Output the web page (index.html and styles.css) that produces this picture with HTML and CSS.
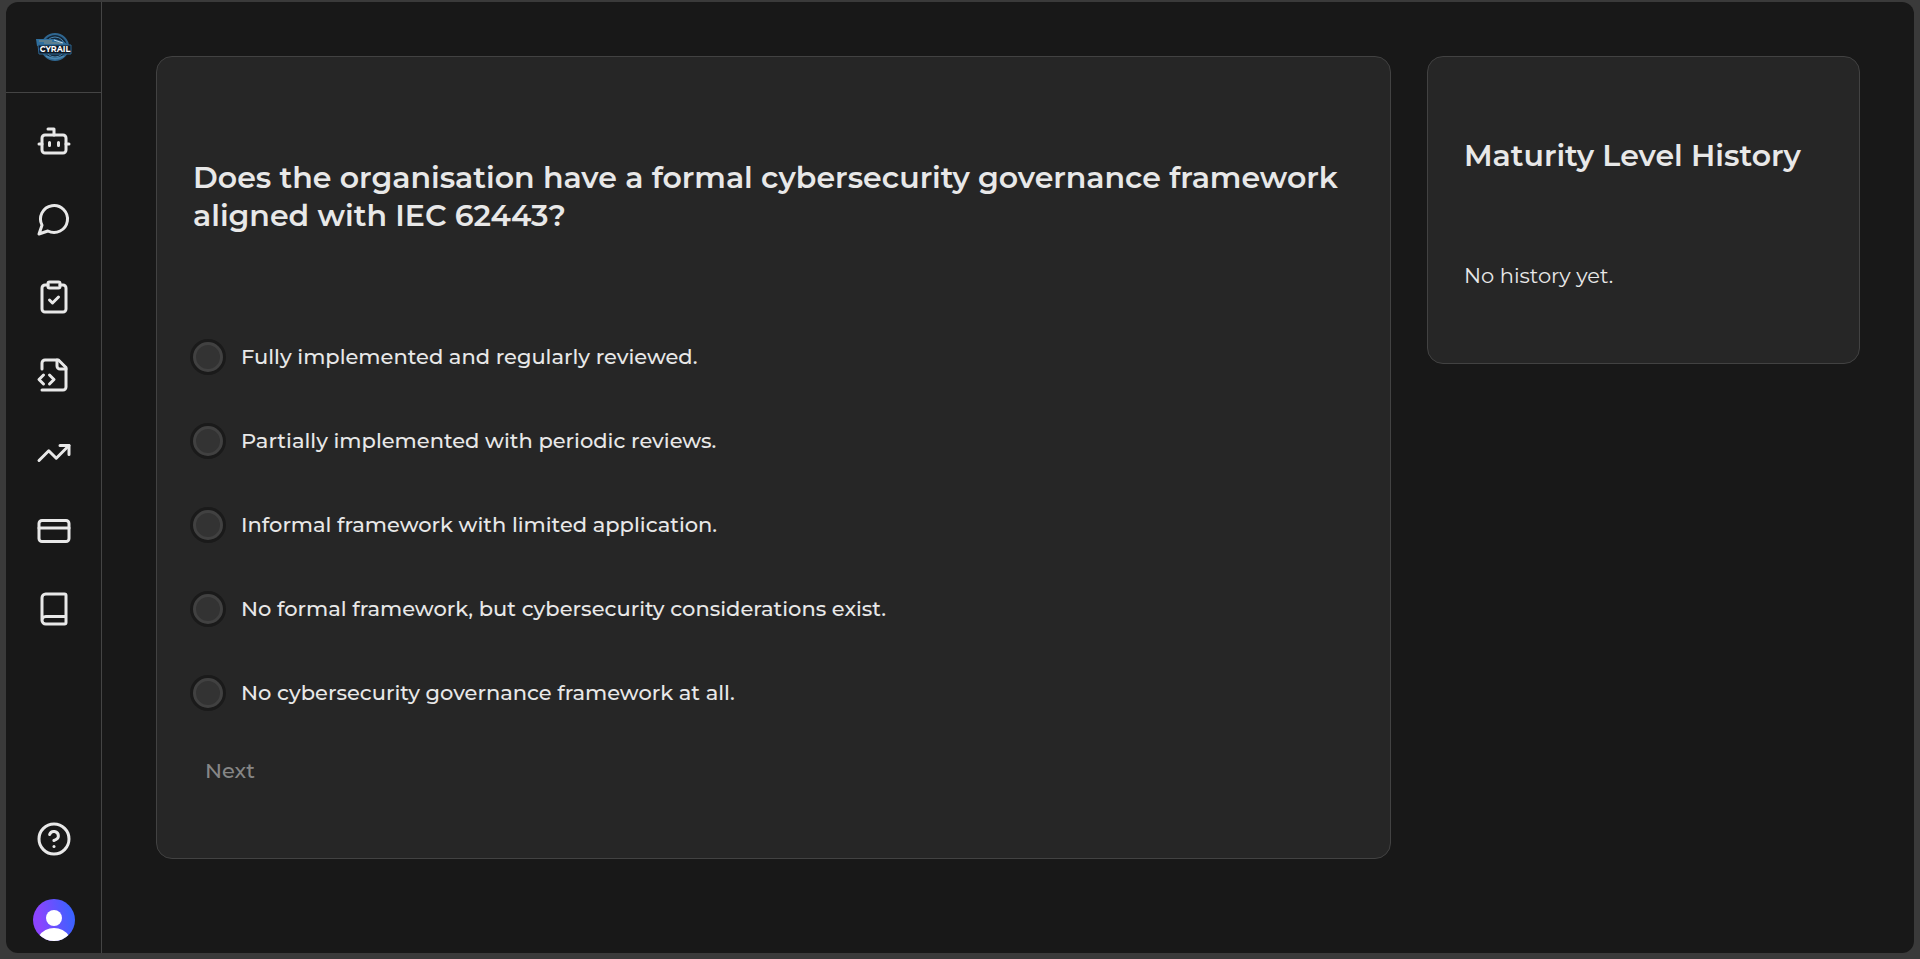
FILE: index.html
```html
<!DOCTYPE html>
<html lang="en">
<head>
  <meta charset="UTF-8">
  <title>Cyrail - Maturity Assessment</title>
  <meta name="viewport" content="width=device-width, initial-scale=1.0">
  <link rel="stylesheet" href="styles.css">
</head>
<body>
  <div class="app">
    <aside class="sidebar">
      <a class="logo" href="#" aria-label="Cyrail home">
        <svg width="36" height="30" viewBox="0 0 36 30">
          <circle cx="19" cy="15" r="13" fill="#14283a" stroke="#2f6690" stroke-width="2"/>
          <circle cx="19" cy="15" r="10" fill="none" stroke="#4a86b0" stroke-width="1"/>
          <path d="M0 7h19l9 3 6 4H1z" fill="#2f6f9e"/>
          <path d="M3 9h13M8 11h18" stroke="#8d9080" stroke-width="1"/>
          <path d="M18 8l9 3" stroke="#b5d0e2" stroke-width="1"/>
          <path d="M2 13h33v9H3z" fill="#0d1826" stroke="#2f6690" stroke-width="1"/>
          <path d="M10 24q9 5 18 0" fill="none" stroke="#4a86b0" stroke-width="2"/>
          <text class="logo-text" x="19" y="20" text-anchor="middle">CYRAIL</text>
        </svg>
      </a>
      <nav class="nav">
        <a href="#" aria-label="Assistant">
          <svg class="icon" viewBox="0 0 24 24"><path d="M12 8V4H8"/><rect width="16" height="12" x="4" y="8" rx="2"/><path d="M2 14h2M20 14h2M15 13v2M9 13v2"/></svg>
        </a>
        <a href="#" aria-label="Chat">
          <svg class="icon" viewBox="0 0 24 24"><path d="M7.9 20A9 9 0 1 0 4 16.1L2 22Z"/></svg>
        </a>
        <a href="#" aria-label="Assessment">
          <svg class="icon" viewBox="0 0 24 24"><rect width="8" height="4" x="8" y="2" rx="1"/><path d="M16 4h2a2 2 0 0 1 2 2v14a2 2 0 0 1-2 2H6a2 2 0 0 1-2-2V6a2 2 0 0 1 2-2h2"/><path d="m9 14 2 2 4-4"/></svg>
        </a>
        <a href="#" aria-label="Code review">
          <svg class="icon" viewBox="0 0 24 24"><path d="M4 22h14a2 2 0 0 0 2-2V7l-5-5H6a2 2 0 0 0-2 2v4"/><path d="M14 2v4a2 2 0 0 0 2 2h4"/><path d="m5 12-3 3 3 3"/><path d="m9 18 3-3-3-3"/></svg>
        </a>
        <a href="#" aria-label="Trends">
          <svg class="icon" viewBox="0 0 24 24"><path d="M22 7 13.5 15.5 8.5 10.5 2 17"/><path d="M16 7h6v6"/></svg>
        </a>
        <a href="#" aria-label="Billing">
          <svg class="icon" viewBox="0 0 24 24"><rect width="20" height="14" x="2" y="5" rx="2"/><path d="M2 10h20"/></svg>
        </a>
        <a href="#" aria-label="Docs">
          <svg class="icon" viewBox="0 0 24 24"><path d="M4 19.5v-15A2.5 2.5 0 0 1 6.5 2H19a1 1 0 0 1 1 1v18a1 1 0 0 1-1 1H6.5a1 1 0 0 1 0-5H20"/></svg>
        </a>
      </nav>
      <div class="sidebar-bottom">
        <a href="#" aria-label="Help">
          <svg class="icon" viewBox="0 0 24 24"><circle cx="12" cy="12" r="10"/><path d="M9.09 9a3 3 0 0 1 5.83 1c0 2-3 3-3 3"/><path d="M12 17h.01"/></svg>
        </a>
        <button class="avatar" type="button" aria-label="Account">
          <svg width="42" height="42" viewBox="0 0 42 42">
            <circle cx="21" cy="19" r="8" fill="#fff"/>
            <path d="M6 37a18 18 0 0 1 30 0v6H6z" fill="#fff"/>
          </svg>
        </button>
      </div>
    </aside>

    <main class="content">
      <form class="card question">
        <h2 id="question">Does the organisation have a formal cybersecurity governance framework aligned with IEC 62443?</h2>
        <div class="options" role="radiogroup" aria-labelledby="question">
          <label><input type="radio" name="answer" value="5">Fully implemented and regularly reviewed.</label>
          <label><input type="radio" name="answer" value="4">Partially implemented with periodic reviews.</label>
          <label><input type="radio" name="answer" value="3">Informal framework with limited application.</label>
          <label><input type="radio" name="answer" value="2">No formal framework, but cybersecurity considerations exist.</label>
          <label><input type="radio" name="answer" value="1">No cybersecurity governance framework at all.</label>
        </div>
        <button class="next" type="button" disabled>Next</button>
      </form>

      <section class="card history">
        <h2>Maturity Level History</h2>
        <p>No history yet.</p>
      </section>
    </main>
  </div>
</body>
</html>
```
FILE: styles.css
```css
* {
  box-sizing: border-box;
}
body {
  margin: 0;
  min-height: 100vh;
  padding: 2px 6px 6px;
  display: flex;
  background: #3a3a3a;
  color: #e8e8e8;
  font-family: Montserrat, Inter, sans-serif;
  font-size: 21px;
  line-height: 30px;
}
.app {
  flex: 1;
  display: flex;
  background: #181818;
  border-radius: 12px;
  overflow: hidden;
}

/* sidebar */
.sidebar {
  width: 96px;
  flex-shrink: 0;
  display: flex;
  flex-direction: column;
  border-right: 1px solid #444;
}
.logo {
  height: 91px;
  display: flex;
  align-items: center;
  justify-content: center;
  border-bottom: 1px solid #444;
}
.logo-text {
  font-size: 8px;
  font-weight: 700;
  fill: #fff;
}
.nav {
  display: flex;
  flex-direction: column;
  align-items: center;
  gap: 42px;
  padding-top: 30px;
}
.nav a,
.sidebar-bottom a {
  display: flex;
}
.icon {
  width: 36px;
  height: 36px;
  fill: none;
  stroke: #e8e8e8;
  stroke-width: 2;
  stroke-linecap: round;
  stroke-linejoin: round;
}
.sidebar-bottom {
  margin-top: auto;
  padding-bottom: 12px;
  display: flex;
  flex-direction: column;
  align-items: center;
  gap: 42px;
}
.avatar {
  width: 42px;
  height: 42px;
  padding: 0;
  border: none;
  border-radius: 50%;
  overflow: hidden;
  background: linear-gradient(80deg, #8b44ff 20%, #3b62ff 90%);
}
.avatar svg {
  display: block;
}

/* content */
.content {
  flex: 1;
  display: grid;
  grid-template-columns: 77fr 27fr;
  align-items: start;
  gap: 36px;
  padding: 54px;
}
.card {
  background: #262626;
  border: 1px solid #424242;
  border-radius: 16px;
  padding: 0 36px;
}
h2 {
  margin: 0;
  font-size: 30px;
  font-weight: 600;
  line-height: 38px;
}
.question {
  padding-top: 102px;
  padding-bottom: 66px;
}
.options {
  display: flex;
  flex-direction: column;
  gap: 54px;
  margin-top: 107px;
  font-weight: 500;
}
.options label {
  display: flex;
  align-items: center;
  gap: 18px;
}
.options input {
  appearance: none;
  flex-shrink: 0;
  width: 30px;
  height: 30px;
  margin: 0;
  background: #333;
  border: 3px solid #414141;
  border-radius: 50%;
  box-shadow: 0 0 0 3px #1a1a1a;
}
.options input:checked {
  background: #8b44ff;
}
.next {
  display: block;
  margin-top: 42px;
  padding: 6px 12px;
  border: none;
  background: none;
  color: #868686;
  font: inherit;
  font-weight: 500;
}
.history {
  padding-top: 80px;
  padding-bottom: 72px;
}
.history p {
  margin: 86px 0 0;
}
```
